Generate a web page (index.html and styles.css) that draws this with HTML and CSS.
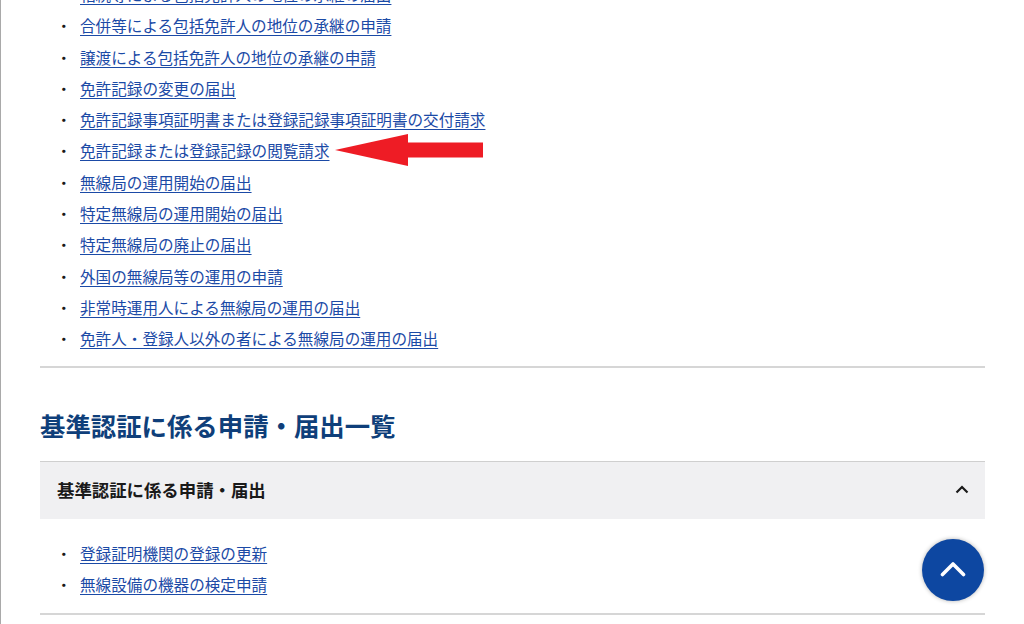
FILE: index.html
```html
<!DOCTYPE html>
<html lang="ja">
<head>
<meta charset="utf-8">
<link rel="stylesheet" href="styles.css">
</head>
<body>
<div class="page">
  <div class="content">
    <ul class="links first">
      <li><a href="#">相続等による包括免許人の地位の承継の届出</a></li>
      <li><a href="#">合併等による包括免許人の地位の承継の申請</a></li>
      <li><a href="#">譲渡による包括免許人の地位の承継の申請</a></li>
      <li><a href="#">免許記録の変更の届出</a></li>
      <li><a href="#">免許記録事項証明書または登録記録事項証明書の交付請求</a></li>
      <li class="marked"><a href="#">免許記録または登録記録の閲覧請求</a>
        <svg class="arrow" width="150" height="34" viewBox="0 0 150 34"><polygon points="0,16 73,0 73,8.5 148,8.5 148,23.5 73,23.5 73,32" fill="#ee1c25"/></svg>
      </li>
      <li><a href="#">無線局の運用開始の届出</a></li>
      <li><a href="#">特定無線局の運用開始の届出</a></li>
      <li><a href="#">特定無線局の廃止の届出</a></li>
      <li><a href="#">外国の無線局等の運用の申請</a></li>
      <li><a href="#">非常時運用人による無線局の運用の届出</a></li>
      <li><a href="#">免許人・登録人以外の者による無線局の運用の届出</a></li>
    </ul>
    <hr class="divider">
    <h2 class="heading">基準認証に係る申請・届出一覧</h2>
    <div class="accordion">
      <div class="acc-head">
        <span>基準認証に係る申請・届出</span>
        <svg class="chev" width="14" height="9" viewBox="0 0 14 9"><polyline points="1.5,7.5 7,2 12.5,7.5" fill="none" stroke="#1a1a1a" stroke-width="2.2"/></svg>
      </div>
      <ul class="links second">
        <li><a href="#">登録証明機関の登録の更新</a></li>
        <li><a href="#">無線設備の機器の検定申請</a></li>
      </ul>
    </div>
    <hr class="divider">
  </div>
  <a class="totop" href="#"><svg width="26" height="16" viewBox="0 0 26 16"><polyline points="2.5,13.5 13,3 23.5,13.5" fill="none" stroke="#fff" stroke-width="3.6" stroke-linecap="round" stroke-linejoin="round"/></svg></a>
</div>
</body>
</html>
```
FILE: styles.css
```css
html, body {
  margin: 0;
  padding: 0;
  height: 100%;
  overflow: hidden;
  background: #fff;
}
body {
  font-family: "Noto Sans CJK JP", "Noto Sans", sans-serif;
  color: #1a1a1a;
}
.page {
  height: 624px;
  border-left: 1px solid #a9a9a9;
  overflow: hidden;
  position: relative;
}
.content {
  width: 945px;
  margin-left: 39px;
  margin-top: -21px;
}
.links {
  list-style: none;
  margin: 0;
  padding: 0 0 0 21px;
}
.links li {
  position: relative;
  height: 31.3px;
  line-height: 31.3px;
  font-size: 15.6px;
  padding-left: 19px;
}
.links li::before {
  content: "・";
  position: absolute;
  left: -5px;
  top: 0;
  font-size: 15.6px;
  color: #1a1a1a;
}
.links a {
  color: #1b4aa6;
  text-decoration: underline;
  text-underline-offset: 3px;
  text-decoration-thickness: 1px;
}
.marked .arrow {
  position: absolute;
  left: 274px;
  top: -1px;
}
.first {
  padding-bottom: 11px;
}
.divider {
  margin: 0;
  border: 0;
  border-top: 2px solid #d6d6d6;
}
.heading {
  margin: 0;
  padding: 37px 0 0;
  height: 56px;
  font-size: 25.4px;
  line-height: 40px;
  font-weight: 700;
  color: #0f3f7a;
}
.accordion {
  border-top: 1px solid #cfcfcf;
}
.acc-head {
  display: flex;
  align-items: center;
  justify-content: space-between;
  height: 57px;
  box-sizing: border-box;
  padding: 0 16px 1px 17px;
  background: #f0f0f2;
  font-size: 17.4px;
  font-weight: 700;
  color: #1a1a1a;
}
.chev {
  margin-top: -1px;
}
.second {
  padding-top: 19px;
  padding-bottom: 13px;
}
.totop {
  position: absolute;
  left: 921px;
  top: 539px;
  width: 62px;
  height: 62px;
  border-radius: 50%;
  background: #0d47a1;
  box-shadow: 0 0 4px rgba(0,0,0,0.3);
  display: flex;
  align-items: center;
  justify-content: center;
}
.totop svg {
  margin-top: -3px;
}
```
